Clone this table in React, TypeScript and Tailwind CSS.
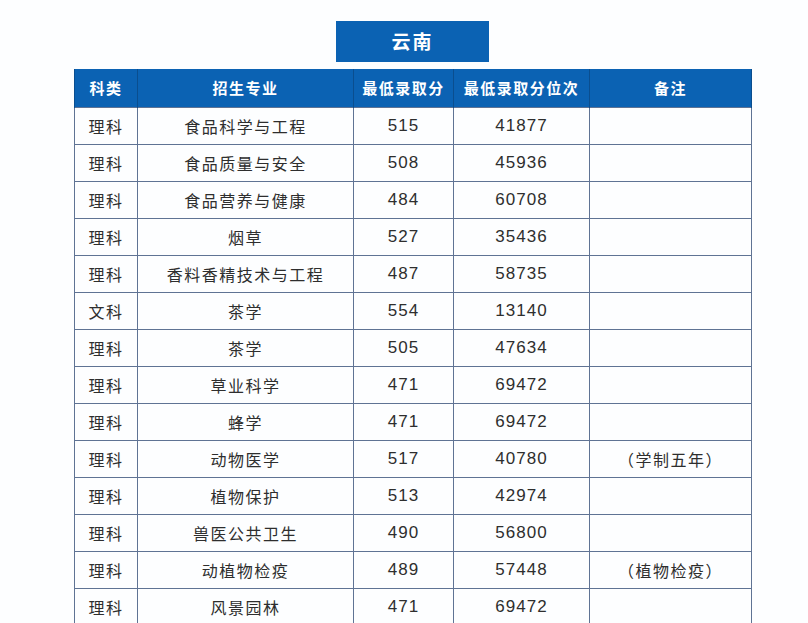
const rows: [string, string, string, string, string][] = [
  ["理科", "食品科学与工程", "515", "41877", ""],
  ["理科", "食品质量与安全", "508", "45936", ""],
  ["理科", "食品营养与健康", "484", "60708", ""],
  ["理科", "烟草", "527", "35436", ""],
  ["理科", "香料香精技术与工程", "487", "58735", ""],
  ["文科", "茶学", "554", "13140", ""],
  ["理科", "茶学", "505", "47634", ""],
  ["理科", "草业科学", "471", "69472", ""],
  ["理科", "蜂学", "471", "69472", ""],
  ["理科", "动物医学", "517", "40780", "（学制五年）"],
  ["理科", "植物保护", "513", "42974", ""],
  ["理科", "兽医公共卫生", "490", "56800", ""],
  ["理科", "动植物检疫", "489", "57448", "（植物检疫）"],
  ["理科", "风景园林", "471", "69472", ""],
]

const headers = ["科类", "招生专业", "最低录取分", "最低录取分位次", "备注"]
const widths = ["w-[63px]", "w-[216px]", "w-[100px]", "w-[136px]", "w-[162px]"]

const cjk = "font-['Noto_Sans_CJK_SC',sans-serif]"
const num = "font-['Liberation_Sans','Noto_Sans_CJK_SC',sans-serif]"

export default function App() {
  return (
    <div className="h-[623px] w-[808px] overflow-hidden bg-[#fdfeff]">
      <div className="ml-[336px] mt-[21px] flex h-[41px] w-[153px] items-center justify-center bg-[#0b62b3]">
        <span className={`${cjk} text-[19px] font-bold tracking-[2px] text-white`}>云南</span>
      </div>
      <table className="ml-[74px] mt-[7px] w-[677px] table-fixed border-collapse">
        <thead>
          <tr className="h-[38px] bg-[#0b62b3]">
            {headers.map((h, i) => (
              <th
                key={h}
                className={`${widths[i]} ${cjk} border-x border-[#0a4e8f] p-0 text-center text-[15px] font-bold tracking-[1.5px] text-white`}
              >
                {h}
              </th>
            ))}
          </tr>
        </thead>
        <tbody>
          {rows.map((r, ri) => (
            <tr key={ri} className="h-[37px]">
              {r.map((c, ci) => (
                <td
                  key={ci}
                  className={`border-[1.5px] border-[#5f7394] p-0 text-center text-[#2e2e2e] ${
                    ci === 2 || ci === 3
                      ? `${num} text-[17px] tracking-[1px]`
                      : `${cjk} text-[16px] tracking-[1.5px]`
                  }`}
                >
                  {c}
                </td>
              ))}
            </tr>
          ))}
        </tbody>
      </table>
    </div>
  )
}
